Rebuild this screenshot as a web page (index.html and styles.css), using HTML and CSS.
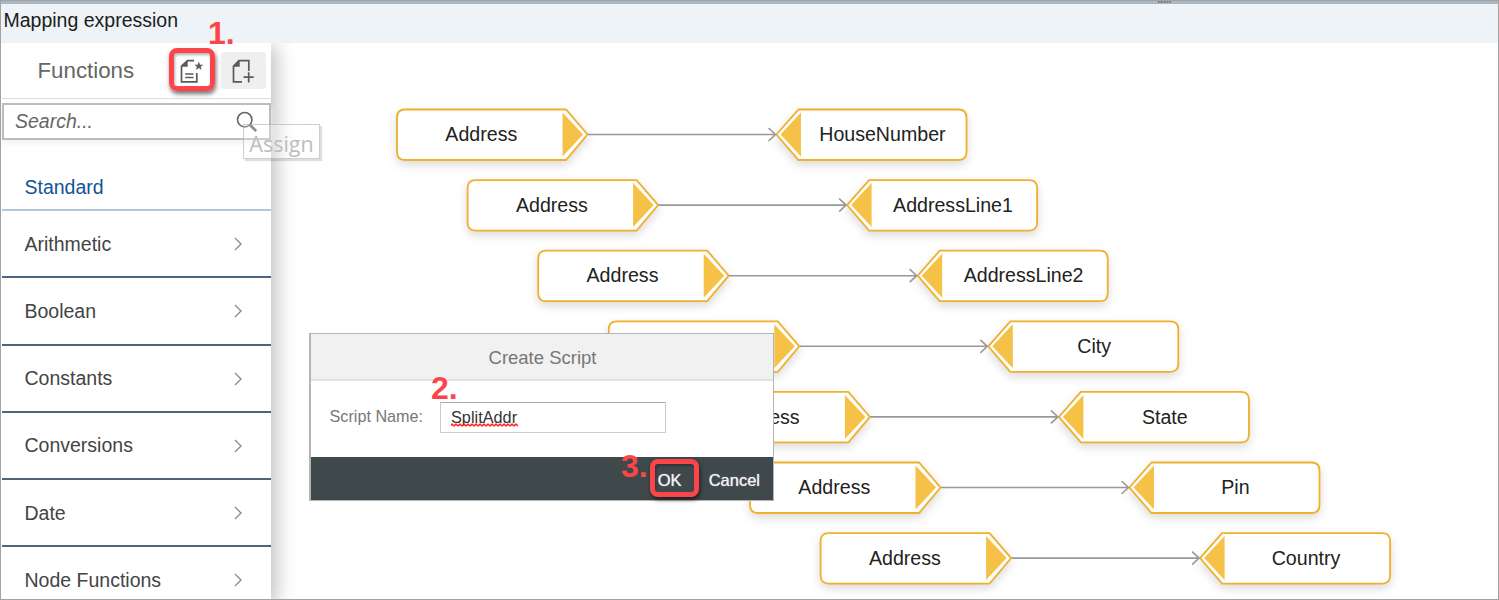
FILE: index.html
```html
<!DOCTYPE html>
<html lang="en">
<head>
<meta charset="utf-8">
<title>Mapping expression</title>
<link rel="stylesheet" href="styles.css">
</head>
<body>
<div class="window">
  <div class="splitter"><span class="grip"></span></div>
  <header class="titlebar">Mapping expression</header>
  <main class="workspace">
    <aside class="sidebar">
      <div class="sidebar-head">
        <h2 class="sidebar-title">Functions</h2>
        <button class="tool tool-marked" aria-label="Create">
          <svg width="26" height="26" viewBox="0 0 26 26">
            <path d="M15 2.700H8.500L2.500 8.200V23.800H17.800V15" fill="none" stroke="#5a5a5a" stroke-width="1.700"/>
            <path d="M8.700 2.500V8.700H2.500z" fill="#5a5a5a"/>
            <path d="M6.200 16H14.500M6.200 19.500H14.500" stroke="#5a5a5a" stroke-width="1.700"/>
            <path d="M19.800 3.600l1.200 3.200h3.300l-2.600 2 .9 3.300-2.800-2-2.800 2 .9-3.300-2.600-2h3.300z" fill="#5a5a5a"/>
          </svg>
        </button>
        <button class="tool tool-plain" aria-label="Assign">
          <svg width="26" height="26" viewBox="0 0 26 26">
            <path d="M11 23.800H2.500V8.200L8 2.700H17.800V13" fill="none" stroke="#5a5a5a" stroke-width="1.700"/>
            <path d="M8.700 2.500V8.700H2.500z" fill="#5a5a5a"/>
            <path d="M12.500 19.200H22.700M17.700 14.200V24.500" stroke="#5a5a5a" stroke-width="1.700"/>
          </svg>
        </button>
      </div>
      <div class="search">
        <span class="search-text">Search...</span>
        <svg width="22" height="22" viewBox="0 0 22 22">
          <circle cx="8.700" cy="8.700" r="7.200" fill="none" stroke="#666" stroke-width="1.600"/>
          <path d="M14 14L20.200 20" stroke="#666" stroke-width="2.600"/>
        </svg>
      </div>
      <div class="group">Standard</div>
      <ul class="list">
        <li class="item">Arithmetic<svg class="chevron" viewBox="0 0 8 14"><path d="M1 1L7 7L1 13"/></svg></li>
        <li class="item">Boolean<svg class="chevron" viewBox="0 0 8 14"><path d="M1 1L7 7L1 13"/></svg></li>
        <li class="item">Constants<svg class="chevron" viewBox="0 0 8 14"><path d="M1 1L7 7L1 13"/></svg></li>
        <li class="item">Conversions<svg class="chevron" viewBox="0 0 8 14"><path d="M1 1L7 7L1 13"/></svg></li>
        <li class="item">Date<svg class="chevron" viewBox="0 0 8 14"><path d="M1 1L7 7L1 13"/></svg></li>
        <li class="item">Node Functions<svg class="chevron" viewBox="0 0 8 14"><path d="M1 1L7 7L1 13"/></svg></li>
      </ul>
    </aside>
    <svg class="canvas" width="1227" height="556" viewBox="271 43 1227 556">
      <defs>
        <g id="link">
          <g class="node">
            <path d="M405 109.500H566L587.500 134.500L566 160H405Q397 160 397 152V117.500Q397 109.500 405 109.500Z"/>
            <path d="M798.500 109.500H958.500Q966.500 109.500 966.500 117.500V152Q966.500 160 958.500 160H798.500L776.500 134.500Z"/>
          </g>
          <path class="fill" d="M562.500 112.500L583 134.500L562.500 156.500ZM801 112.500L780.500 134.500L801 156.500Z"/>
          <path class="wire" d="M588 134.500H775M768.500 128L775.500 134.500L768.500 141"/>
        </g>
      </defs>
      <g><use href="#link"/><text x="481.300" y="141.300">Address</text><text x="882.400" y="141.300">HouseNumber</text></g>
      <g transform="translate(70.600 70.600)"><use href="#link"/><text x="481.300" y="141.300">Address</text><text x="882.400" y="141.300">AddressLine1</text></g>
      <g transform="translate(141.200 141.200)"><use href="#link"/><text x="481.300" y="141.300">Address</text><text x="882.400" y="141.300">AddressLine2</text></g>
      <g transform="translate(211.800 211.800)"><use href="#link"/><text x="481.300" y="141.300">Address</text><text x="882.400" y="141.300">City</text></g>
      <g transform="translate(282.400 282.400)"><use href="#link"/><text x="481.300" y="141.300">Address</text><text x="882.400" y="141.300">State</text></g>
      <g transform="translate(353 353)"><use href="#link"/><text x="481.300" y="141.300">Address</text><text x="882.400" y="141.300">Pin</text></g>
      <g transform="translate(423.600 423.600)"><use href="#link"/><text x="481.300" y="141.300">Address</text><text x="882.400" y="141.300">Country</text></g>
    </svg>
  </main>
</div>

<div class="tooltip">Assign</div>

<section class="dialog">
  <div class="dialog-head">Create Script</div>
  <div class="dialog-body">
    <span class="label">Script Name:</span>
    <div class="field"><span class="misspelt">SplitAddr<svg class="squiggle" width="67" height="4" viewBox="0 0 67 4"><defs><pattern id="wave" width="4" height="4" patternUnits="userSpaceOnUse"><path d="M-1 3.500L1 1L3 3L5 .5" fill="none" stroke="#f22" stroke-width="1.300"/></pattern></defs><rect width="67" height="4" fill="url(#wave)"/></svg></span></div>
  </div>
  <div class="dialog-foot">
    <span class="action ok">OK</span>
    <span class="action">Cancel</span>
  </div>
</section>

<div class="marker marker-create"></div>
<div class="marker marker-ok"></div>
<div class="step step-one">1.</div>
<div class="step step-two">2.</div>
<div class="step step-three">3.</div>
</body>
</html>
```
FILE: styles.css
```css
* { box-sizing: border-box; }
body {
  margin: 0;
  width: 1499px;
  height: 600px;
  position: relative;
  overflow: hidden;
  background: #fff;
  font-family: "Liberation Sans", Arial, sans-serif;
}
.window {
  width: 1499px;
  height: 600px;
  display: flex;
  flex-direction: column;
  border: 1px solid #a2a2a2;
}
.splitter {
  height: 3px;
  flex: none;
  background: #aab8c3;
  padding-left: 1157px;
  display: flex;
}
.grip {
  width: 13px;
  height: 2px;
  background: repeating-linear-gradient(90deg, #777 0 1px, #999 1px 3px);
}
.titlebar {
  height: 39px;
  flex: none;
  background: #edf3f7;
  padding-left: 2.500px;
  color: #1c1c1c;
  font-size: 19.500px;
  line-height: 33px;
}
.workspace {
  flex: 1;
  min-height: 0;
  display: flex;
  overflow: hidden;
}
.sidebar {
  width: 270px;
  flex: none;
  padding-left: 1px;
  background: #fff;
  box-shadow: 4px 4px 18px 2px rgba(0, 0, 0, .24);
  z-index: 1;
}
.sidebar-head {
  height: 56px;
  border-bottom: 1px solid #ddd;
  display: flex;
  align-items: center;
  padding-left: 35.500px;
}
.sidebar-title {
  margin: 0;
  width: 131.500px;
  font-size: 22.300px;
  font-weight: 400;
  color: #666;
}
.tool {
  width: 45px;
  height: 37px;
  border: 0;
  padding: 0;
  display: flex;
  align-items: center;
  justify-content: center;
  background: none;
}
.tool-plain {
  margin-left: 7px;
  background: #efefef;
  border-radius: 3px;
}
.search {
  height: 37px;
  margin-top: 4px;
  border: 2px solid #bcbcbc;
  display: flex;
  align-items: center;
  justify-content: space-between;
  padding: 0 11px 0 11px;
  font-size: 19.500px;
  font-style: italic;
  color: #666;
  box-shadow: 0 4px 5px #f3f3f3;
}
.group {
  height: 71px;
  border-bottom: 2px solid #b1c7de;
  padding: 24px 0 0 22.500px;
  color: #145395;
  font-size: 19.500px;
  line-height: 46px;
}
.list { list-style: none; margin: 0; padding: 0; }
.item {
  height: 67.250px;
  border-bottom: 2px solid #4d657c;
  padding: 1px 29px 0 22.500px;
  display: flex;
  align-items: center;
  justify-content: space-between;
  font-size: 19.500px;
  color: #444;
}
.chevron { width: 8px; height: 14px; }
.chevron path { fill: none; stroke: #888; stroke-width: 1.300; }
.canvas { flex: none; display: block; }
.node { filter: drop-shadow(0 4px 5px rgba(0, 0, 0, .14)); }
.node path { fill: #fff; stroke: #efb02c; stroke-width: 1.800; }
.fill { fill: #f5c147; }
.wire { fill: none; stroke: #999; stroke-width: 1.600; }
.canvas text { font-size: 19.600px; text-anchor: middle; fill: #222; }
.tooltip {
  position: absolute;
  z-index: 2;
  left: 243px;
  top: 124px;
  width: 77px;
  height: 35px;
  border: 1px solid rgba(165, 165, 165, .55);
  background: rgba(255, 255, 255, .25);
  box-shadow: 2px 2px 1px rgba(0, 0, 0, .13);
  color: #bdbdbd;
  font: 21.500px/37px "Open Sans", sans-serif;
  text-align: center;
}
.dialog {
  position: absolute;
  z-index: 2;
  left: 309px;
  top: 333px;
  width: 465px;
  height: 168px;
  border: 1px solid #b4b4b4;
  border-left-width: 2px;
  background: #fff;
  display: flex;
  flex-direction: column;
}
.dialog-head {
  height: 47px;
  background: #f1f1f1;
  border-bottom: 2px solid #e1e1e1;
  text-align: center;
  font-size: 18.500px;
  line-height: 47px;
  color: #777;
  padding-left: 1px;
}
.dialog-body {
  flex: 1;
  display: flex;
  align-items: center;
  padding: 0 0 3px 18.500px;
}
.label {
  width: 110.500px;
  font-size: 16.200px;
  color: #777;
  padding-bottom: 2px;
}
.field {
  width: 226px;
  height: 31px;
  border: 1px solid #ccc;
  border-top-color: #aaa;
  padding-left: 10px;
  font-size: 16.300px;
  line-height: 28px;
  color: #333;
}
.misspelt { position: relative; display: inline-block; }
.squiggle { position: absolute; left: 0; top: 20px; }
.dialog-foot {
  height: 43px;
  background: #3f484b;
  display: flex;
  align-items: center;
  justify-content: flex-end;
  gap: 27px;
  padding: 3px 13px 0 0;
}
.action {
  color: #f2f2f2;
  font-size: 16.500px;
  text-shadow: 0 0 1px #ddd;
}
.marker {
  position: absolute;
  z-index: 3;
  border: 5px solid #fb4548;
  border-radius: 8px;
  box-shadow: 1px 3px 4px rgba(0, 0, 0, .55), inset 1px 2px 3px rgba(0, 0, 0, .3);
}
.marker-create { left: 169px; top: 48px; width: 46px; height: 43px; }
.marker-ok { left: 650px; top: 459px; width: 49px; height: 38px; }
.step {
  position: absolute;
  z-index: 3;
  color: #fb4548;
  font-size: 32px;
  font-weight: 700;
  line-height: 36px;
}
.step-one { left: 208px; top: 15px; }
.step-two { left: 431px; top: 370px; }
.step-three { left: 621px; top: 448px; }
```
